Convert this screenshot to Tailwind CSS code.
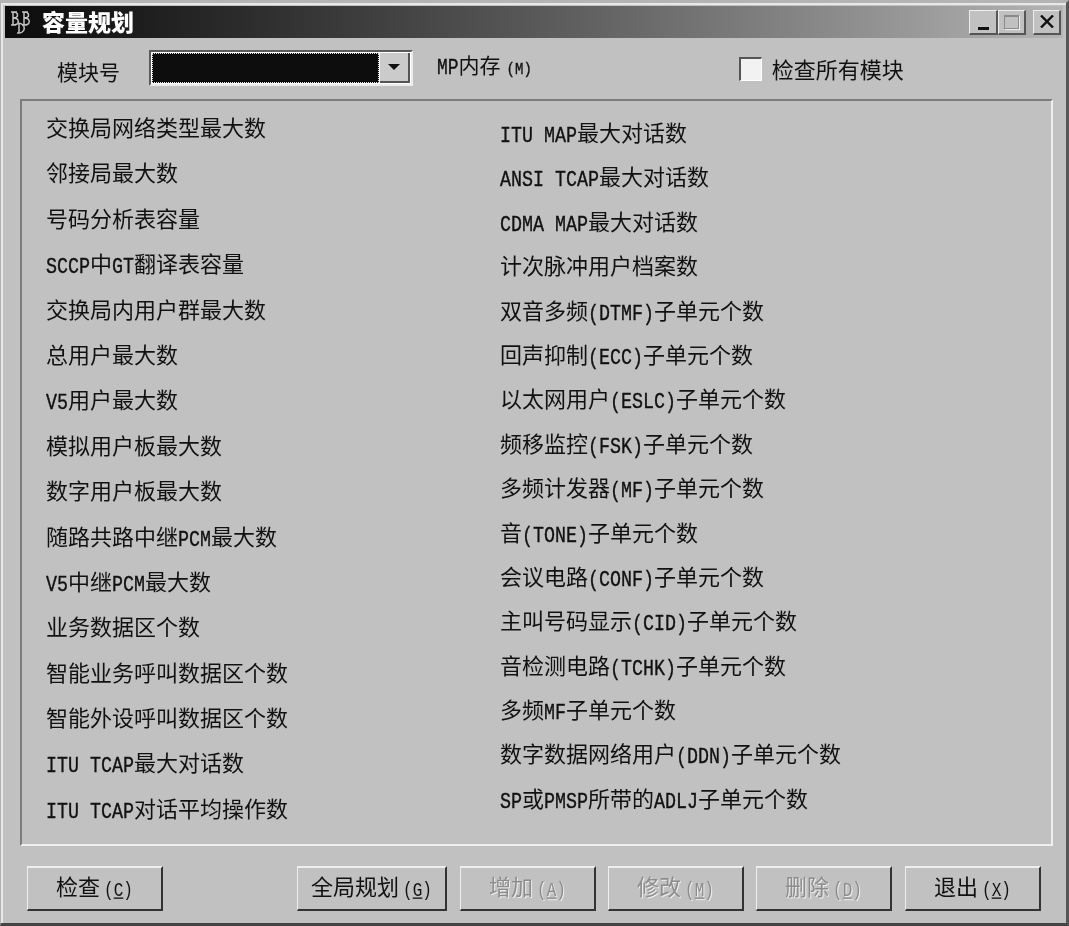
<!DOCTYPE html>
<html lang="zh">
<head>
<meta charset="utf-8" />
<title>容量规划</title>
<script src="https://cdn.jsdelivr.net/npm/@tailwindcss/browser@4"></script>
</head>
<body class="bg-[#c1c1c1]">
<div class="w-[1069px] h-[926px] overflow-hidden flex flex-col bg-[#c1c1c1] text-[#111] blur-[0.4px] border-t-[3px] border-l border-r-[3px] border-b-[3px] border-t-[#b4b4b4] border-l-[#b0b0b0] border-r-[#555] border-b-[#444] shadow-[inset_0_2px_0_#e8e8e8,inset_2px_0_0_#e8e8e8] font-['Noto_Sans_CJK_SC','Noto_Sans',sans-serif]">

  <!-- title bar -->
  <div class="ml-[4px] mr-[3px] mt-[3px] h-[32px] shrink-0 flex items-center bg-gradient-to-r from-[#0c0c0c] to-[#b4b4b4]">
    <svg class="ml-[4px] w-[28px] h-[26px]" viewBox="0 0 28 26" fill="none" stroke="#c4c4c4" stroke-width="1.5">
      <path d="M2 3h6M4 3v13M4 3c6 0 6 6 0 6c7 0 7 7 0 7M2 16h5" />
      <path d="M13 3h6M15 3v13M15 3c6 0 6 6 0 6c7 0 7 7 0 7M13 16h5" />
      <path d="M10 14v10M8 24c9 1 10-9 1-10" />
    </svg>
    <span class="ml-[5px] mb-[2px] text-[23px] leading-none font-black text-white">容量规划</span>
    <div class="ml-auto mr-[2px] flex items-center">
      <button class="w-[29px] h-[25px] bg-[#c1c1c1] border-t border-l border-t-[#eee] border-l-[#eee] border-r-2 border-b-2 border-r-[#555] border-b-[#555] flex items-end justify-center pb-[3px]">
        <span class="block w-[11px] h-[3px] bg-[#111]"></span>
      </button>
      <button class="w-[28px] h-[25px] bg-[#c1c1c1] border-t border-l border-t-[#eee] border-l-[#eee] border-r-2 border-b-2 border-r-[#555] border-b-[#555] flex items-center justify-center">
        <span class="block w-[15px] h-[14px] border border-[#8a8a8a] border-t-2 shadow-[1px_1px_0_#eee]"></span>
      </button>
      <button class="ml-[7px] w-[28px] h-[25px] bg-[#c1c1c1] border-t border-l border-t-[#eee] border-l-[#eee] border-r-2 border-b-2 border-r-[#555] border-b-[#555] flex items-center justify-center">
        <svg class="w-[14px] h-[13px]" viewBox="0 0 14 13" stroke="#111" stroke-width="2.4"><path d="M1 0.5L13 12.5M13 0.5L1 12.5" /></svg>
      </button>
    </div>
  </div>

  <!-- module row -->
  <div class="h-[61px] shrink-0 flex items-center">
    <span class="ml-[56px] mt-[6px] text-[21px] leading-none">模块号</span>
    <div class="ml-[29px] mt-[-2px] w-[264px] h-[36px] flex bg-white border-t-2 border-l-2 border-t-[#5a5a5a] border-l-[#5a5a5a] border-r-2 border-b-2 border-r-[#ececec] border-b-[#ececec] p-[1px]">
      <div class="flex-1 bg-[#0d0d0d] border border-dotted border-[#e0e0e0]"></div>
      <div class="ml-[1px] w-[30px] bg-[#cbcbcb] border-r-2 border-b-2 border-r-[#555] border-b-[#555] flex items-center justify-center">
        <span class="block w-0 h-0 border-l-[6px] border-r-[6px] border-t-[6px] border-l-transparent border-r-transparent border-t-[#111]"></span>
      </div>
    </div>
    <span class="ml-[24px] mt-[-6px] text-[21px] leading-none"><span class="inline-block scale-y-[1.2] font-['Liberation_Mono',monospace] text-[18px] [-webkit-text-stroke:0.3px]">MP</span>内存<span class="inline-block scale-y-[1.2] ml-[6px] font-['Liberation_Mono',monospace] text-[14px] [-webkit-text-stroke:0.3px]">(M)</span></span>
    <span class="ml-[207px] block w-[23px] h-[24px] bg-[#f2f2f2] border-t-2 border-l-2 border-t-[#555] border-l-[#555] border-r border-b border-r-white border-b-white"></span>
    <span class="ml-[10px] mt-[-2px] text-[22px] leading-none">检查所有模块</span>
  </div>

  <!-- capacity panel -->
  <div class="ml-[19px] mr-[13px] h-[747px] shrink-0 flex border-t-2 border-l-2 border-t-[#7c7c7c] border-l-[#7c7c7c] border-r-2 border-b-2 border-r-[#efefef] border-b-[#efefef] text-[22px]">
    <div class="w-[478px] pl-[24px] pt-[3px] [&>div]:h-[45.4px] [&>div]:leading-[45.4px] [&_b]:inline-block [&_b]:scale-y-[1.2] [&_b]:font-normal [&_b]:text-[18.33px] [&_b]:font-['Liberation_Mono',monospace] [&_b]:whitespace-pre [&_b]:[-webkit-text-stroke:0.3px]">
      <div>交换局网络类型最大数</div>
      <div>邻接局最大数</div>
      <div>号码分析表容量</div>
      <div><b>SCCP</b>中<b>GT</b>翻译表容量</div>
      <div>交换局内用户群最大数</div>
      <div>总用户最大数</div>
      <div><b>V5</b>用户最大数</div>
      <div>模拟用户板最大数</div>
      <div>数字用户板最大数</div>
      <div>随路共路中继<b>PCM</b>最大数</div>
      <div><b>V5</b>中继<b>PCM</b>最大数</div>
      <div>业务数据区个数</div>
      <div>智能业务呼叫数据区个数</div>
      <div>智能外设呼叫数据区个数</div>
      <div><b>ITU TCAP</b>最大对话数</div>
      <div><b>ITU TCAP</b>对话平均操作数</div>
    </div>
    <div class="pt-[8px] [&>div]:h-[44.4px] [&>div]:leading-[44.4px] [&_b]:inline-block [&_b]:scale-y-[1.2] [&_b]:font-normal [&_b]:text-[18.33px] [&_b]:font-['Liberation_Mono',monospace] [&_b]:whitespace-pre [&_b]:[-webkit-text-stroke:0.3px]">
      <div><b>ITU MAP</b>最大对话数</div>
      <div><b>ANSI TCAP</b>最大对话数</div>
      <div><b>CDMA MAP</b>最大对话数</div>
      <div>计次脉冲用户档案数</div>
      <div>双音多频<b>(DTMF)</b>子单元个数</div>
      <div>回声抑制<b>(ECC)</b>子单元个数</div>
      <div>以太网用户<b>(ESLC)</b>子单元个数</div>
      <div>频移监控<b>(FSK)</b>子单元个数</div>
      <div>多频计发器<b>(MF)</b>子单元个数</div>
      <div>音<b>(TONE)</b>子单元个数</div>
      <div>会议电路<b>(CONF)</b>子单元个数</div>
      <div>主叫号码显示<b>(CID)</b>子单元个数</div>
      <div>音检测电路<b>(TCHK)</b>子单元个数</div>
      <div>多频<b>MF</b>子单元个数</div>
      <div>数字数据网络用户<b>(DDN)</b>子单元个数</div>
      <div><b>SP</b>或<b>PMSP</b>所带的<b>ADLJ</b>子单元个数</div>
    </div>
  </div>

  <!-- buttons -->
  <div class="mt-[20px] ml-[26px] flex text-[22px] leading-none [&>button]:h-[45px] [&>button]:pb-[4px] [&>button]:bg-[#c1c1c1] [&>button]:border-t-2 [&>button]:border-l [&>button]:border-t-[#eee] [&>button]:border-l-[#eee] [&>button]:border-r-2 [&>button]:border-b-2 [&>button]:border-r-[#333] [&>button]:border-b-[#333] [&_span]:inline-block [&_span]:ml-[4px] [&_span]:scale-y-[1.3] [&_span]:text-[16px] [&_span]:font-['Liberation_Mono',monospace]">
    <button class="w-[136px]">检查<span>(<u>C</u>)</span></button>
    <button class="ml-[134px] w-[150px]">全局规划<span>(<u>G</u>)</span></button>
    <button class="ml-[13px] w-[136px] text-[#8c8c8c] [text-shadow:1px_1px_0_#eee]">增加<span>(<u>A</u>)</span></button>
    <button class="ml-[12px] w-[136px] text-[#8c8c8c] [text-shadow:1px_1px_0_#eee]">修改<span>(<u>M</u>)</span></button>
    <button class="ml-[12px] w-[136px] text-[#8c8c8c] [text-shadow:1px_1px_0_#eee]">删除<span>(<u>D</u>)</span></button>
    <button class="ml-[13px] w-[136px]">退出<span>(<u>X</u>)</span></button>
  </div>
</div>
</body>
</html>
